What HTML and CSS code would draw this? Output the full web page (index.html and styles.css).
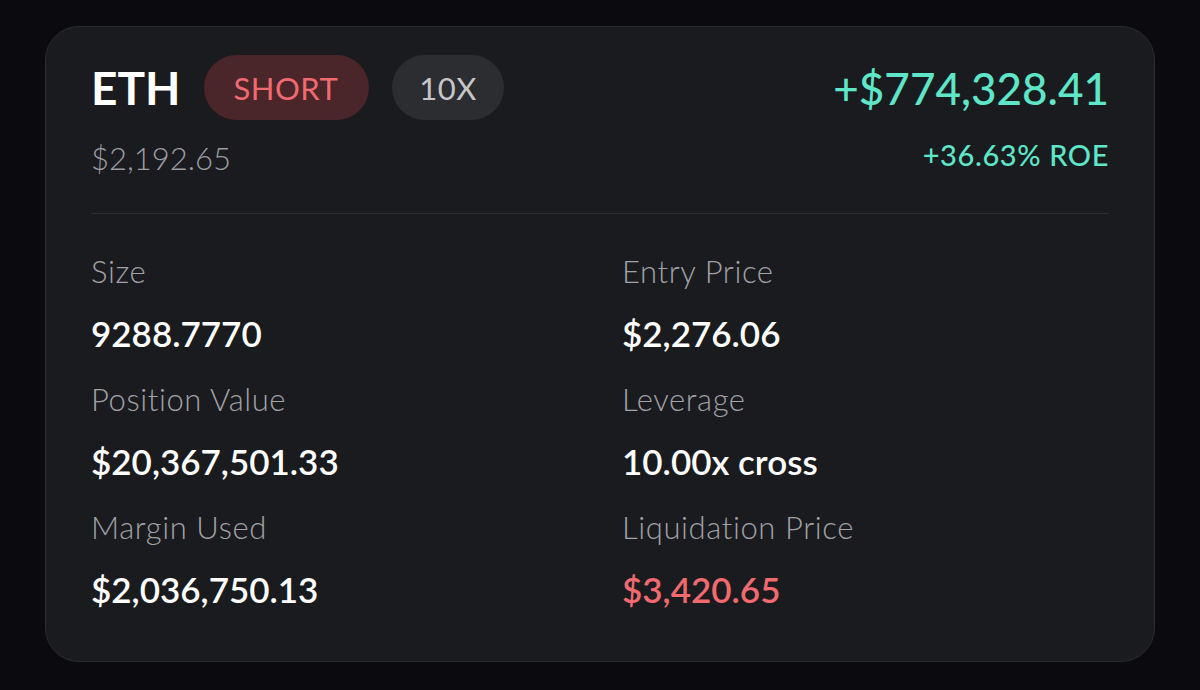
FILE: index.html
```html
<!DOCTYPE html>
<html lang="en">
  <head>
    <meta charset="UTF-8" />
    <meta name="viewport" content="width=device-width, initial-scale=1.0" />
    <title>ETH position</title>
    <link rel="stylesheet" href="styles.css">
  </head>
  <body>
    <main class="card">
      <header class="top">
        <div class="asset">
          <div class="title-row">
            <h1 class="ticker">ETH</h1>
            <span class="pill pill-short">SHORT</span>
            <span class="pill pill-lev">10X</span>
          </div>
          <div class="mark">$2,192.65</div>
        </div>
        <div class="pnl">
          <div class="pnl-amount">+$774,328.41</div>
          <div class="pnl-roe">+36.63% ROE</div>
        </div>
      </header>

      <div class="divider"></div>

      <section class="stats">
        <div class="stat">
          <div class="label">Size</div>
          <div class="value">9288.7770</div>
        </div>
        <div class="stat">
          <div class="label">Entry Price</div>
          <div class="value">$2,276.06</div>
        </div>
        <div class="stat">
          <div class="label">Position Value</div>
          <div class="value">$20,367,501.33</div>
        </div>
        <div class="stat">
          <div class="label">Leverage</div>
          <div class="value">10.00x cross</div>
        </div>
        <div class="stat">
          <div class="label">Margin Used</div>
          <div class="value">$2,036,750.13</div>
        </div>
        <div class="stat">
          <div class="label">Liquidation Price</div>
          <div class="value value-liq">$3,420.65</div>
        </div>
      </section>
    </main>
  </body>
</html>
```

FILE: styles.css
```css
body{
    margin: 0;
    background: #0b0b0f;
    font-family: "Lato", "Inter", sans-serif;
    color: #ffffff;
}
.card{
    box-sizing: border-box;
    width: 1110px;
    margin: 26px 0 0 45px;
    padding: 28px 45px 50px 45px;
    background: #1a1b1f;
    border: 1px solid #2b2c31;
    border-radius: 34px;
}
.top{
    display: flex;
    justify-content: space-between;
    align-items: flex-start;
}
.title-row{
    display: flex;
    align-items: center;
    gap: 23px;
    height: 65px;
}
.ticker{
    margin: 0;
    font-size: 46px;
    font-weight: 700;
}
.pill{
    display: flex;
    align-items: center;
    justify-content: center;
    height: 65px;
    border-radius: 33px;
    font-size: 31px;
    font-weight: 400;
    letter-spacing: 0.5px;
}
.pill-short{
    padding: 0 31px 0 30px;
    background: #4a2529;
    color: #f06a70;
}
.pill-lev{
    padding: 0 27px;
    background: #2c2d31;
    color: #c6c6c9;
}
.mark{
    margin-top: 18px;
    line-height: 40px;
    font-size: 31px;
    font-weight: 300;
    color: #9c9ca1;
}
.pnl{
    text-align: right;
    color: #5de6c7;
}
.pnl-amount{
    margin-top: 5px;
    line-height: 56px;
    font-size: 44px;
    font-weight: 500;
}
.pnl-roe{
    margin-top: 21px;
    line-height: 36px;
    font-size: 29px;
    font-weight: 500;
    letter-spacing: 0.6px;
}
.divider{
    height: 1px;
    margin-top: 35px;
    background: #2c2d32;
}
.stats{
    display: grid;
    grid-template-columns: 531px 1fr;
    row-gap: 24px;
    margin-top: 37px;
}
.label{
    line-height: 40px;
    font-size: 31px;
    font-weight: 300;
    letter-spacing: 0.6px;
    color: #a2a2a7;
}
.value{
    margin-top: 20px;
    line-height: 44px;
    font-size: 35px;
    font-weight: 600;
    color: #ffffff;
}
.value-liq{
    color: #f06a6e;
}
```
